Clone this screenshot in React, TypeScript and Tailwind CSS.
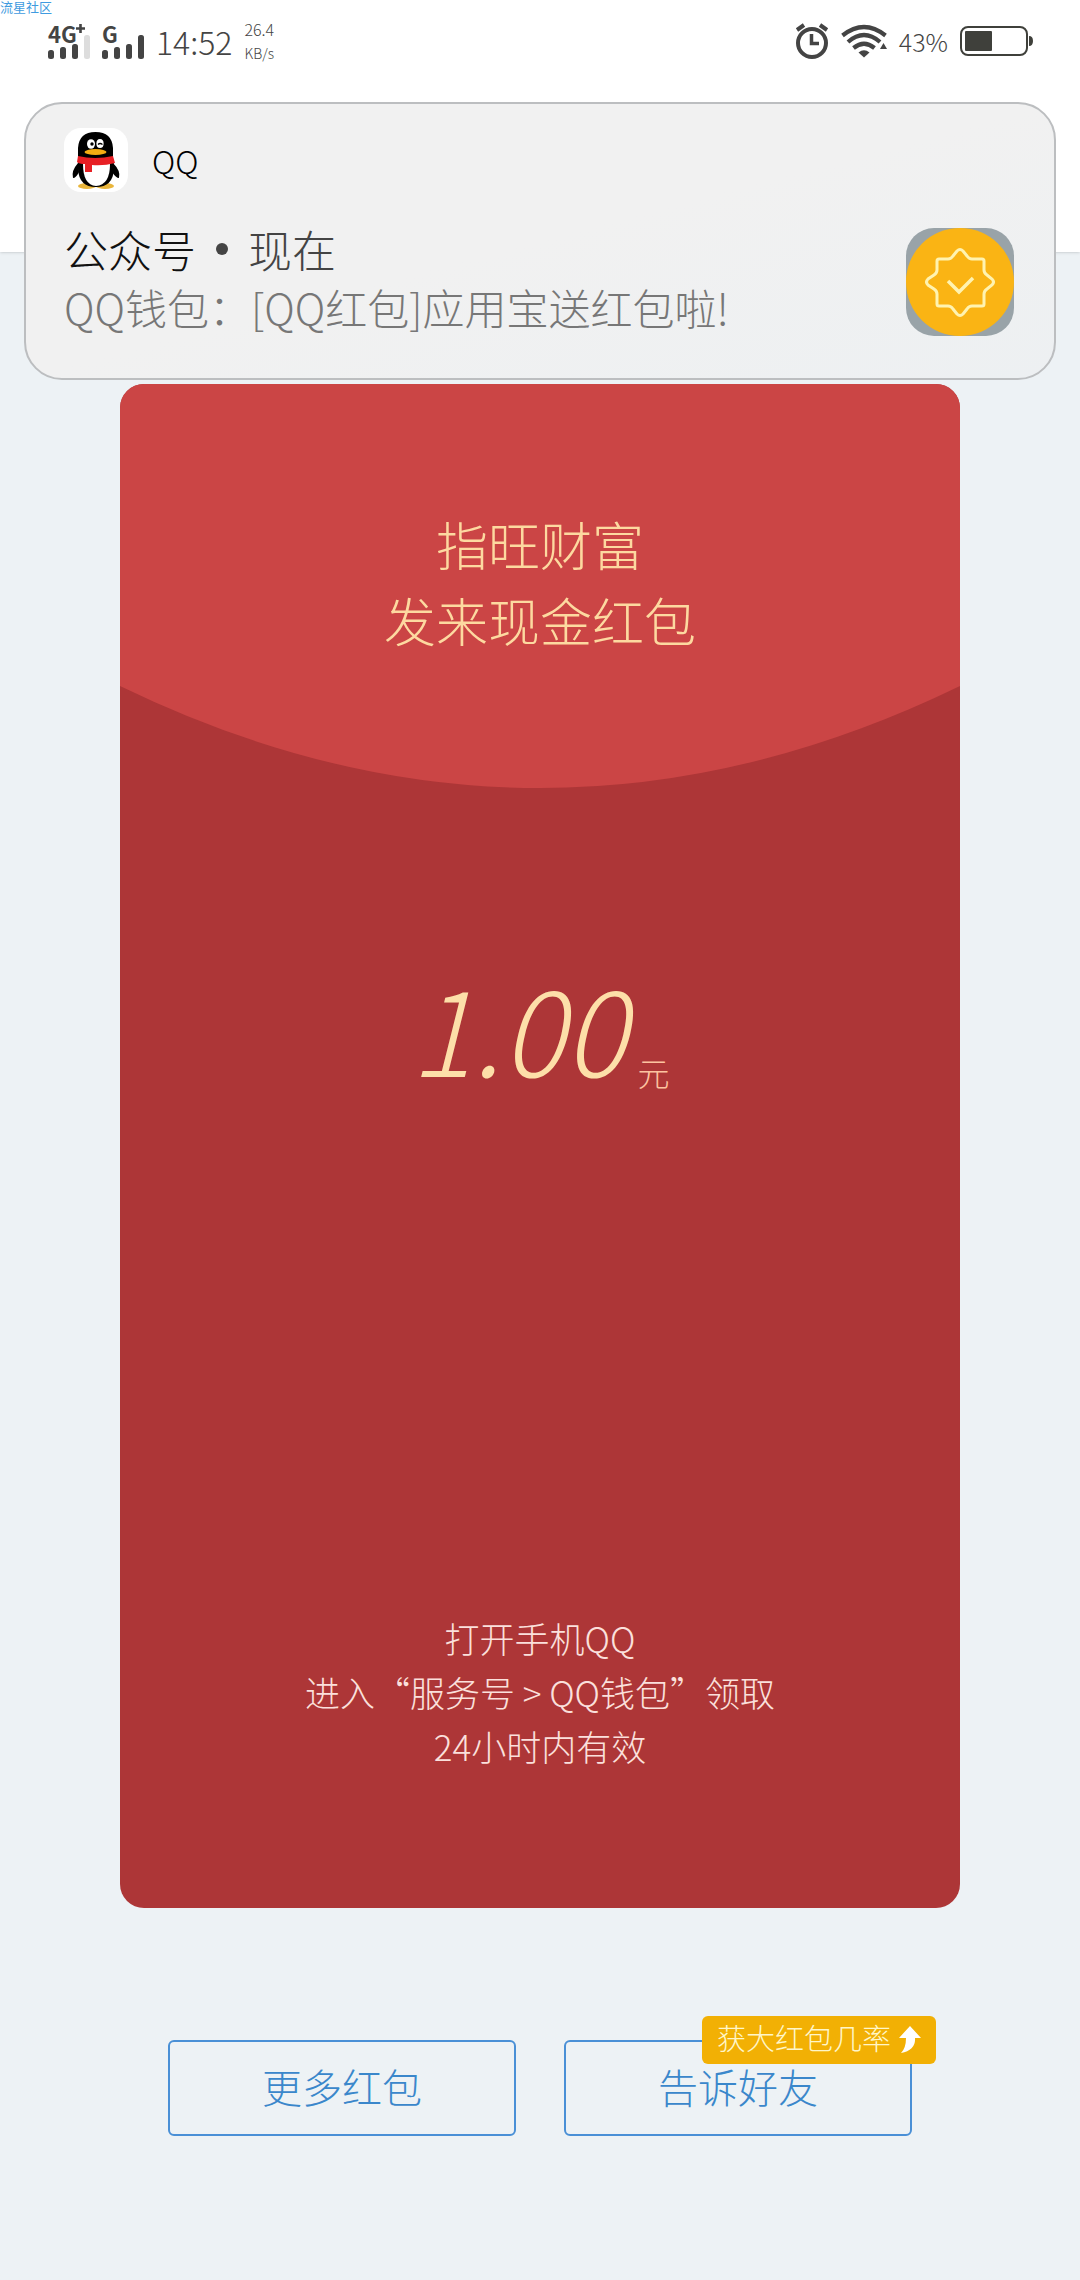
/**
 * App.tsx
 * Cash red packet page with a QQ heads-up notification over it.
 */

interface SignalProps {
    label: string;
    plus?: boolean;
    dimLast?: boolean;
}

function Signal({ label, plus, dimLast }: SignalProps) {
    const bars = [9, 12, 15, 24];
    return (
        <div className="flex flex-col">
            <span className="flex h-5 items-center text-[22px] leading-6 font-bold">
                {label}
                {plus && (
                    <svg className="-ml-px self-start" width="9" height="10" viewBox="0 0 9 10">
                        <path d="M0 5.5h9M4.5 1v9" stroke="#444" strokeWidth="2.6" />
                    </svg>
                )}
            </span>
            <svg className="-mt-2" width="42" height="24" viewBox="0 0 42 24">
                {bars.map((h, i) => (
                    <rect key={h} x={i * 12} y={24 - h} width="6" height={h} rx="2.5" fill={dimLast && i === 3 ? '#ddd' : '#444'} />
                ))}
            </svg>
        </div>
    );
}

function AlarmIcon() {
    return (
        <svg width="34" height="36" viewBox="0 0 34 36" fill="none" stroke="#444" strokeWidth="4">
            <circle cx="17" cy="20" r="14" />
            <path d="M16.5 11v9.5H24" strokeWidth="3.5" />
            <path d="M2 7l7-5M32 7l-7-5" strokeWidth="4" />
        </svg>
    );
}

function WifiIcon() {
    return (
        <svg width="46" height="34" viewBox="0 0 46 34" fill="none" stroke="#444" strokeWidth="4.2">
            <path d="M1.5 11.5Q23-5.5 44.5 11.5" />
            <path d="M7 18Q23 4 39 18" />
            <path d="M12.5 24Q23 15.5 33.5 24" />
            <path d="M17.5 28.5Q23 24 28.5 28.5L23 33.5Z" fill="#444" stroke="none" />
            <path d="M39 25l3.5-6 3.5 6z" fill="#444" stroke="none" />
        </svg>
    );
}

function BatteryIcon() {
    return (
        <svg width="74" height="32" viewBox="0 0 74 32">
            <rect x="1" y="2" width="66" height="28" rx="7" fill="none" stroke="#3f403b" strokeWidth="2" />
            <rect x="5" y="6" width="27" height="20" rx="1" fill="#3f403b" />
            <path d="M69 11q4 0 4 5t-4 5z" fill="#3f403b" />
        </svg>
    );
}

function StatusBar() {
    return (
        <div className="flex items-center justify-between pr-[46px] pl-12 text-[#444]">
            <div className="flex items-center">
                <div className="flex gap-3">
                    <Signal label="4G" plus dimLast />
                    <Signal label="G" />
                </div>
                <span className="ml-3 text-[32px] leading-10 font-light">14:52</span>
                <div className="ml-3 flex flex-col gap-1 font-light">
                    <span className="text-[16px] leading-5">26.4</span>
                    <span className="text-[14px] leading-5">KB/s</span>
                </div>
            </div>
            <div className="flex items-center">
                <AlarmIcon />
                <div className="ml-3"><WifiIcon /></div>
                <span className="mx-3 text-[25px] leading-10 font-light">43%</span>
                <BatteryIcon />
            </div>
        </div>
    );
}

function QQIcon() {
    return (
        <svg className="h-16 w-16" viewBox="0 0 64 64">
            <rect width="64" height="64" rx="17" fill="#fff" />
            <ellipse cx="23" cy="58" rx="9" ry="3" fill="#e9b53b" />
            <ellipse cx="41" cy="58" rx="9" ry="3" fill="#e9b53b" />
            <path d="M14 35Q7 43 9 50Q12 50 15 44ZM49 35Q57 43 55 50Q52 50 48 44Z" fill="#000" />
            <path d="M14 30V20Q15 4 31.5 4Q48 4 49 20V30Q50 36 50 41Q49 59 32 59Q15 59 14 41Q14 36 14 30Z" fill="#000" />
            <path d="M19 36H46Q46 57 32 58Q19 57 19 36Z" fill="#fff" />
            <path d="M14 28Q31 32 49 28L51 35Q40 38 28 37V44H21V36Q15 36 13 34Z" fill="#e71f24" />
            <ellipse cx="27" cy="16" rx="4" ry="4.8" fill="#fff" />
            <ellipse cx="36" cy="15.5" rx="3.6" ry="4.5" fill="#fff" />
            <circle cx="28" cy="16" r="1.7" fill="#000" />
            <path d="M34 16.5q2-2 4.5 0" stroke="#000" fill="none" strokeWidth="1.2" />
            <ellipse cx="31.5" cy="24" rx="11" ry="3" fill="#f3ac12" />
        </svg>
    );
}

function WalletIcon() {
    return (
        <svg className="h-[108px] w-[108px] shrink-0" viewBox="0 0 108 108" fill="none">
            <rect width="108" height="108" rx="28" fill="#99a3a8" />
            <circle cx="54" cy="54" r="54" fill="#fab414" />
            <path
                d="M31 33Q31 31 33 31H42Q45 31 47 28L51 23Q54 20 57 23L61 28Q63 31 66 31H76Q78 31 78 33V42Q78 45 81 47L86 51Q89 54 86 57L81 61Q78 63 78 66V76Q78 78 76 78H66Q63 78 61 81L57 86Q54 89 51 86L47 81Q45 78 42 78H33Q31 78 31 76V66Q31 63 28 61L22 57Q19 54 22 51L28 47Q31 45 31 42Z"
                stroke="#fff3b0"
                strokeWidth="3"
            />
            <path d="M42 53L53 64L67 50" stroke="#fff3b0" strokeWidth="3.5" />
        </svg>
    );
}

function Notification() {
    return (
        <aside className="absolute inset-x-6 top-[102px] rounded-[38px] border-2 border-[#bcbec0] bg-linear-to-br from-[#f1f1f1] from-50% to-[#edf0f2] pt-6 pr-10 pb-[42px] pl-[38px]">
            <div className="flex items-center gap-6 text-[32px] leading-10 font-light text-black">
                <QQIcon />
                <span>QQ</span>
            </div>
            <div className="mt-7 flex items-end justify-between">
                <div className="leading-[58px] font-light whitespace-nowrap">
                    <p className="flex items-center gap-5 text-[44px] text-[#444]">
                        <span className="text-[#111]">公众号</span>
                        <span className="h-3 w-3 rounded-full bg-[#444]" />
                        <span>现在</span>
                    </p>
                    <p className="text-[42px] text-[#777]">QQ钱包：[QQ红包]应用宝送红包啦!</p>
                </div>
                <WalletIcon />
            </div>
        </aside>
    );
}

function Envelope() {
    return (
        <section className="overflow-hidden rounded-3xl bg-[#ad3637] pb-[135px] text-center font-light">
            <h1 className="bg-[#cb4545] pt-[122px] pb-7 text-[52px] leading-[76px] font-light text-[#fdd9a0]">
                指旺财富
                <br />
                发来现金红包
            </h1>
            <svg className="block h-[102px] w-full" viewBox="0 0 840 102" preserveAspectRatio="none">
                <path d="M0 0H840Q420 204 0 0Z" fill="#cb4545" />
            </svg>
            <p className="mt-[172px] flex items-end justify-center gap-3 text-[#fddfa9]">
                <span className="text-[116px] leading-[132px] italic">1.00</span>
                <span className="text-[32px] leading-10 text-[#fdc3a0]">元</span>
            </p>
            <p className="mt-[519px] text-[35px] leading-[54px] text-[#fbe0dc]">
                打开手机QQ
                <br />
                进入“服务号 &gt; QQ钱包”领取
                <br />
                24小时内有效
            </p>
        </section>
    );
}

export default function App() {
    return (
        <div lang="zh-CN" className='relative min-h-screen bg-[#edf2f5] pb-36 font-["Noto_Sans_CJK_SC",sans-serif]'>
            <header className="h-[252px] bg-white shadow-sm">
                <p className="text-[13px] leading-[13px] text-[#3f9be0]">流星社区</p>
                <div className="pt-[6px]"><StatusBar /></div>
            </header>
            <main className="px-[120px] pt-[132px]">
                <Envelope />
                <div className="mt-[132px] grid grid-cols-2 gap-12 px-12 text-[40px] text-[#3a87cb]">
                    <button className="h-24 rounded-md border-2 border-[#4a90d6] pb-1 font-light">更多红包</button>
                    <button className="relative h-24 rounded-md border-2 border-[#4a90d6] pb-1 font-light">
                        告诉好友
                        <span className="absolute -top-[26px] -right-[26px] flex h-12 items-center gap-2 rounded-md bg-[#f2b004] px-[15px] pb-1 text-[29px] whitespace-nowrap text-[#fff6c8]">
                            获大红包几率
                            <svg className="mt-1" width="22" height="28" viewBox="0 0 22 28" fill="#fff">
                                <path d="M11 0L22 12H16Q17 24 2 27Q7 22 7 12H0Z" />
                            </svg>
                        </span>
                    </button>
                </div>
            </main>
            <Notification />
        </div>
    );
}
